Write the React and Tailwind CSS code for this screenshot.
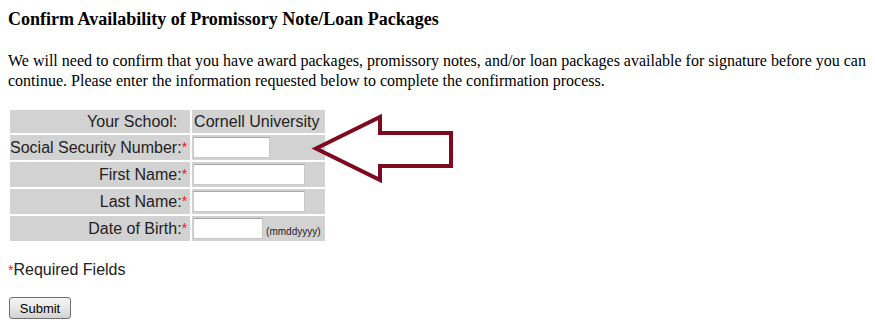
export default function App() {
    const rows = [
        { label: "Social Security Number:", input: "w-[77px]" },
        { label: "First Name:", input: "w-[112px]" },
        { label: "Last Name:", input: "w-[112px]" },
    ];

    return (
        <div className="relative w-[875px] h-[328px] bg-white px-2 text-black">
            {/* Heading */}
            <h3 className="pt-2 text-[18px] leading-[22px] font-bold font-['Liberation_Serif',serif]">
                Confirm Availability of Promissory Note/Loan Packages
            </h3>

            <p className="mt-[21px] text-[16px] leading-5 font-['Liberation_Serif',serif]">
                We will need to confirm that you have award packages, promissory notes, and/or loan packages available for signature before you can continue. Please enter the information requested below to complete the confirmation process.
            </p>

            {/* Form table */}
            <table className="mt-[17px] border-separate border-spacing-[2px] font-['Liberation_Sans',Arial,sans-serif] text-[16px] text-[#222]">
                <tbody>
                    <tr>
                        <td className="w-[179px] h-[23px] bg-[#d2d2d2] p-0 pr-[3px] text-right leading-none whitespace-nowrap">
                            Your School:<span className="invisible text-[14px] align-top">*</span>&nbsp;
                        </td>
                        <td className="w-[133px] h-[23px] bg-[#d2d2d2] p-0 pl-[2px] leading-none whitespace-nowrap">Cornell University</td>
                    </tr>
                    {rows.map((row) => (
                        <tr key={row.label}>
                            <td className="h-[25px] bg-[#d2d2d2] p-0 pr-[3px] text-right leading-none whitespace-nowrap">
                                {row.label}
                                <span className="text-[14px] text-[#e8192f] align-top">*</span>
                            </td>
                            <td className="h-[25px] bg-[#d2d2d2] p-0 pl-[1px] leading-none">
                                <input
                                    type="text"
                                    className={`${row.input} h-[21px] block bg-white border border-[#c8c8c8] border-t-[#a9a9a9] outline-none`}
                                />
                            </td>
                        </tr>
                    ))}
                    <tr>
                        <td className="h-[25px] bg-[#d2d2d2] p-0 pr-[3px] text-right leading-none whitespace-nowrap">
                            Date of Birth:
                            <span className="text-[14px] text-[#e8192f] align-top">*</span>
                        </td>
                        <td className="h-[25px] bg-[#d2d2d2] p-0 pl-[1px] leading-none">
                            <div className="flex items-end gap-[3px]">
                                <input
                                    type="text"
                                    className="w-[70px] h-[21px] block bg-white border border-[#c8c8c8] border-t-[#a9a9a9] outline-none"
                                />
                                <span className="text-[10px] leading-[12px] pb-[1px] whitespace-nowrap">(mmddyyyy)</span>
                            </div>
                        </td>
                    </tr>
                </tbody>
            </table>

            <p className="mt-[18px] font-['Liberation_Sans',Arial,sans-serif] text-[16px] leading-[18px] text-[#222]">
                <span className="text-[14px] text-[#e8192f] align-top">*</span>Required Fields
            </p>

            <button
                type="button"
                className="mt-[18px] ml-[1px] w-[62px] h-[22px] rounded-[3px] border border-[#707070] bg-gradient-to-b from-[#f4f4f4] via-[#e8e8e8] to-[#d0d0d0] font-['Liberation_Sans',Arial,sans-serif] text-[13px] leading-none text-black"
            >
                Submit
            </button>

            {/* Annotation arrow */}
            <svg className="absolute left-0 top-0 pointer-events-none" width="875" height="328">
                <polygon
                    points="316,148.5 380,117 380,133 451,133 451,166 380,166 380,180"
                    fill="none"
                    stroke="#7d0a1e"
                    strokeWidth="4"
                    strokeLinejoin="miter"
                />
            </svg>
        </div>
    );
}
